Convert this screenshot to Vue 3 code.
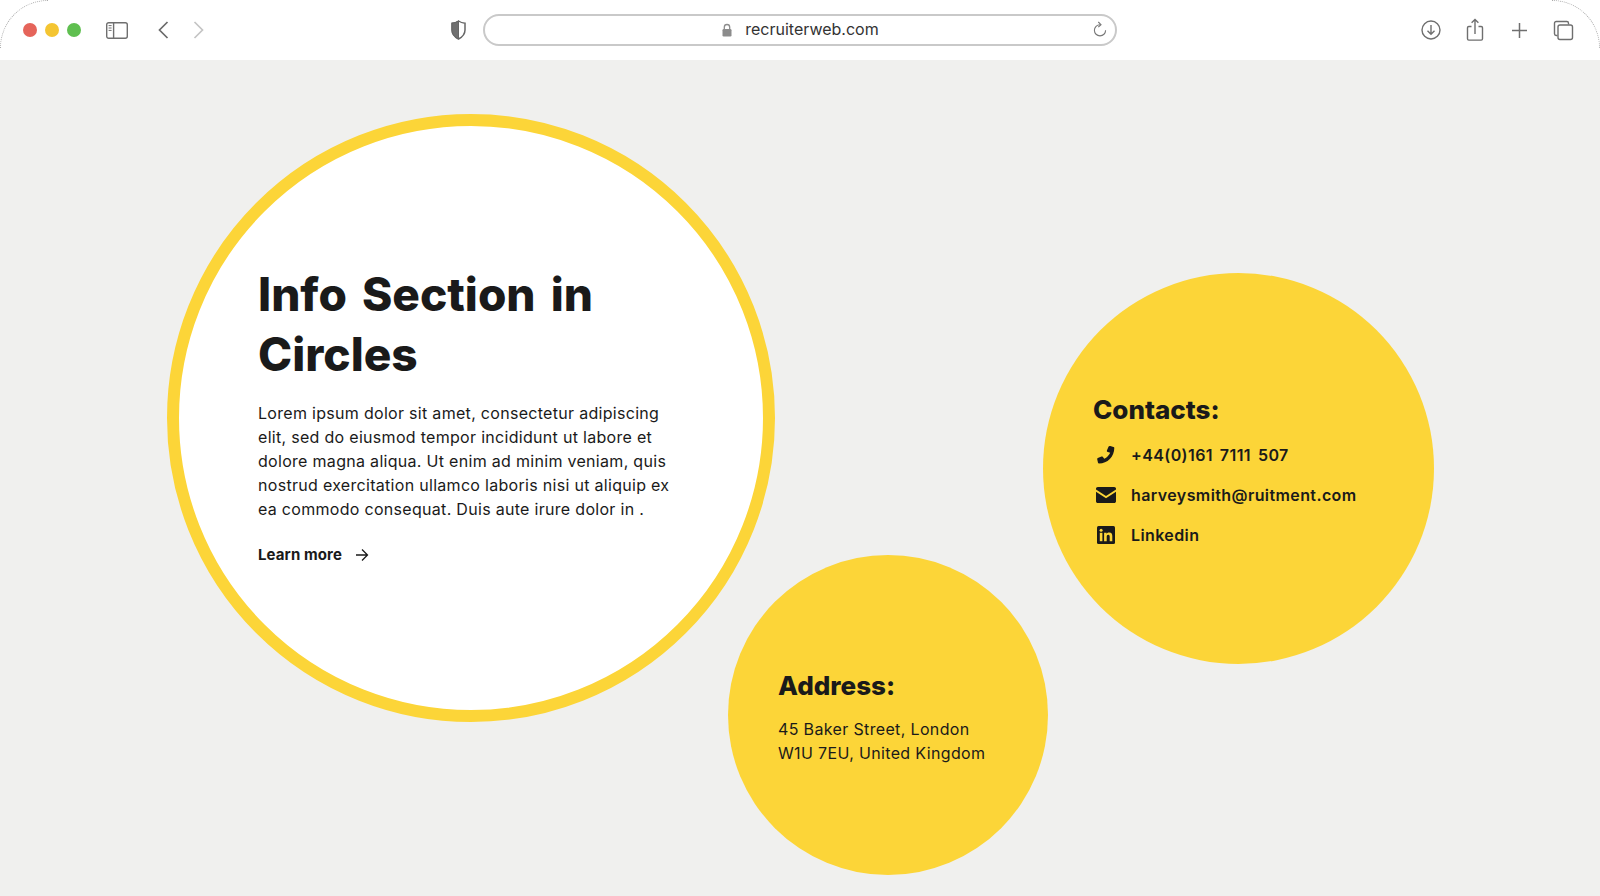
<script setup>
const contacts = [
  { id: 'phone', label: '+44(0)161 7111 507' },
  { id: 'mail', label: 'harveysmith@ruitment.com' },
  { id: 'linkedin', label: 'Linkedin' }
]
</script>

<template>
  <div class="page">
    <header class="toolbar">
      <div class="left">
        <span class="light red"></span>
        <span class="light amber"></span>
        <span class="light green"></span>
        <svg class="sidebar-icon" width="24" height="19" viewBox="0 0 24 19" fill="none" stroke="#6f6f6f" stroke-width="1.4">
          <rect x="1.7" y="1.7" width="20.6" height="15.6" rx="2" />
          <path d="M8.6 1.7v15.6" />
          <path d="M3.6 4.6h3M3.6 7h3M3.6 9.4h3" stroke-width="1" />
        </svg>
        <svg class="chevron" width="11" height="18" viewBox="0 0 11 18" fill="none" stroke="#6a6a6a" stroke-width="1.7">
          <path d="M9.5 1 1.5 9l8 8" />
        </svg>
        <svg class="chevron next" width="11" height="18" viewBox="0 0 11 18" fill="none" stroke="#c4c4c4" stroke-width="1.7">
          <path d="M1.5 1l8 8-8 8" />
        </svg>
        <svg class="shield" width="15" height="20" viewBox="0 0 15 20">
          <path d="M7.5 1C5.6 2.3 3.500 3 1 3.200V10c0 4 2.600 7 6.500 9 3.900-2 6.500-5 6.500-9V3.200C11.500 3 9.400 2.300 7.500 1Z" fill="#fff" stroke="#666" stroke-width="1.500" />
          <path d="M7.500 1C5.600 2.300 3.500 3 1 3.200V10c0 4 2.600 7 6.500 9Z" fill="#707070" stroke="#666" stroke-width="1" />
        </svg>
      </div>
      <div class="url">
        <svg width="12" height="14" viewBox="0 0 12 14" fill="none">
          <path d="M3.300 6V4.200a2.700 2.700 0 0 1 5.400 0V6" stroke="#8c8c8c" stroke-width="1.300" />
          <rect x="1.500" y="6" width="9" height="7.500" rx="1.200" fill="#8c8c8c" />
        </svg>
        <span class="host">recruiterweb.com</span>
        <svg class="reload" width="16" height="18" viewBox="0 0 16 18" fill="none" stroke="#777" stroke-width="1.100">
          <path d="M8 3.700a5.600 5.600 0 1 0 5.600 5.600" />
          <path d="M6.300 1 9 3.700 6.300 6.200" />
        </svg>
      </div>
      <div class="right">
        <svg width="22" height="22" viewBox="0 0 22 22" fill="none" stroke="#6f6f6f" stroke-width="1.400">
          <circle cx="11" cy="11" r="9" />
          <path d="M11 6v9M7.500 11.800 11 15.300l3.500-3.500" />
        </svg>
        <svg width="18" height="24" viewBox="0 0 18 24" fill="none" stroke="#6f6f6f" stroke-width="1.400">
          <path d="M5.500 8.500H2.800A1.300 1.300 0 0 0 1.500 9.800v11a1.300 1.300 0 0 0 1.300 1.300h12.400a1.300 1.300 0 0 0 1.300-1.300v-11a1.300 1.300 0 0 0-1.300-1.300h-2.700" />
          <path d="M9 16V1.500M5.600 4.800 9 1.500l3.400 3.300" />
        </svg>
        <svg width="17" height="17" viewBox="0 0 17 17" fill="none" stroke="#6f6f6f" stroke-width="1.500">
          <path d="M8.500 1v15M1 8.500h15" />
        </svg>
        <svg width="21" height="21" viewBox="0 0 21 21" fill="none" stroke="#6f6f6f" stroke-width="1.400">
          <path d="M4.500 15.500H3.200a1.700 1.700 0 0 1-1.700-1.700V3.200a1.700 1.700 0 0 1 1.700-1.700h10.600a1.700 1.700 0 0 1 1.700 1.700v1.300" />
          <rect x="5" y="5" width="14.500" height="14.500" rx="2" />
        </svg>
      </div>
    </header>

    <main class="stage">
      <section class="circle intro">
        <h1>Info Section in Circles</h1>
        <p>Lorem ipsum dolor sit amet, consectetur adipiscing elit, sed do eiusmod tempor incididunt ut labore et dolore magna aliqua. Ut enim ad minim veniam, quis nostrud exercitation ullamco laboris nisi ut aliquip ex ea commodo consequat. Duis aute irure dolor in .</p>
        <a class="more" href="#" @click.prevent>
          Learn more
          <svg width="14" height="14" viewBox="0 0 14 14" fill="none" stroke="#1a1a1a" stroke-width="1.300">
            <path d="M1 7h11.500M7 1.500 12.500 7 7 12.500" />
          </svg>
        </a>
      </section>

      <section class="circle address">
        <h2>Address:</h2>
        <p>45 Baker Street, London<br>W1U 7EU, United Kingdom</p>
      </section>

      <section class="circle contacts">
        <h2>Contacts:</h2>
        <ul>
          <li v-for="item in contacts" :key="item.id">
            <svg v-if="item.id === 'phone'" width="20" height="20" viewBox="0 0 20 20" fill="#1a1a1a">
              <path d="M14.200 1.100 17.500 1.900c.5.100.8.500.8 1C18.300 11.300 11.500 18.500 3 18.500c-.5 0-.9-.3-1-.8l-.8-3.400c-.1-.5.100-1 .6-1.200l3.700-1.600c.4-.2.900-.1 1.200.3l1.600 2c2.600-1.200 4.700-3.400 5.900-6L11.200 6.700c-.4-.3-.5-.8-.3-1.200l1.600-3.700c.2-.5.700-.8 1.700-.7Z" />
            </svg>
            <svg v-else-if="item.id === 'mail'" width="20" height="16" viewBox="0 0 20 16" fill="#1a1a1a">
              <path d="M1.800 0h16.400C19.200 0 20 .8 20 1.800v.7l-10 6.600L0 2.500v-.7C0 .8.800 0 1.800 0Z" />
              <path d="M0 4.700 10 11.200l10-6.500v9.500c0 1-.8 1.800-1.800 1.800H1.800C.8 16 0 15.200 0 14.200Z" />
            </svg>
            <svg v-else width="18" height="18" viewBox="0 0 18 18">
              <rect width="18" height="18" rx="1.500" fill="#1a1a1a" />
              <rect x="2.800" y="6.800" width="2.600" height="8.400" fill="#fcd538" />
              <circle cx="4.100" cy="4.200" r="1.500" fill="#fcd538" />
              <path d="M7.100 6.800h2.500V8c.5-.9 1.500-1.400 2.700-1.400 2.300 0 3 1.500 3 3.700v4.900h-2.600v-4.400c0-1-.2-2-1.400-2s-1.600.9-1.600 2v4.400H7.100Z" fill="#fcd538" />
            </svg>
            <span>{{ item.label }}</span>
          </li>
        </ul>
      </section>
    </main>
  </div>
</template>

<style>
html, body {
  margin: 0;
  background: #f0f0ee;
}
</style>

<style scoped>
.page {
  width: 1600px;
  height: 896px;
  overflow: hidden;
  background: #f0f0ee;
  color: #1a1a1a;
  font-family: Inter, "Liberation Sans", sans-serif;
}
.toolbar {
  position: relative;
  display: grid;
  grid-template-columns: 483px 634px 1fr;
  align-items: center;
  height: 60px;
  background: #fff;
}
.toolbar::before,
.toolbar::after {
  content: "";
  position: absolute;
  top: 0;
  width: 48px;
  height: 48px;
  box-sizing: border-box;
  border-top: 1px dotted #aaa;
}
.toolbar::before {
  left: 0;
  border-left: 1px dotted #aaa;
  border-top-left-radius: 48px;
}
.toolbar::after {
  right: 0;
  border-right: 1px dotted #aaa;
  border-top-right-radius: 48px;
}
.left {
  display: flex;
  align-items: center;
  padding-left: 23px;
}
.light {
  width: 14px;
  height: 14px;
  border-radius: 50%;
  margin-right: 8px;
}
.red { background: #e5645a; }
.amber { background: #f4c532; }
.green { background: #5fbf50; }
.sidebar-icon { margin-left: 16px; }
.chevron { margin-left: 29px; }
.chevron.next { margin-left: 24px; }
.shield { margin-left: 247px; }
.url {
  display: flex;
  align-items: center;
  justify-content: center;
  gap: 12px;
  position: relative;
  box-sizing: border-box;
  height: 32px;
  border: 2px solid #c9c9c9;
  border-radius: 16px;
  font-size: 16px;
  line-height: 26px;
}
.host {
  color: #333;
  padding-bottom: 2px;
}
.reload {
  position: absolute;
  right: 7px;
  top: 5px;
}
.right {
  display: grid;
  grid-auto-flow: column;
  grid-auto-columns: 44px;
  justify-content: end;
  justify-items: center;
  align-items: center;
  padding-right: 15px;
}
.stage {
  display: flex;
  align-items: flex-start;
  padding-left: 167px;
}
.circle {
  flex: none;
  display: flex;
  flex-direction: column;
  justify-content: center;
  box-sizing: border-box;
  border-radius: 50%;
  background: #fcd538;
  letter-spacing: .3px;
}
.intro {
  width: 608px;
  height: 608px;
  margin-top: 53.500px;
  padding-left: 79px;
  padding-bottom: 4px;
  background: #fff;
  border: 12px solid #fcd538;
}
h1 {
  margin: 0 0 17px;
  width: 400px;
  font-size: 46px;
  line-height: 60px;
  font-weight: 800;
  letter-spacing: 0;
  word-spacing: 5px;
}
.intro p {
  margin: 0 0 22px;
  width: 420px;
  font-size: 16px;
  line-height: 24px;
}
.more {
  display: flex;
  align-items: center;
  gap: 13px;
  color: #1a1a1a;
  text-decoration: none;
  font-size: 15px;
  line-height: 24px;
  font-weight: 700;
  letter-spacing: .1px;
}
.address {
  width: 320px;
  height: 320px;
  margin: 495px 0 0 -47px;
  padding: 4px 0 0 50px;
  letter-spacing: .35px;
}
.contacts {
  width: 391px;
  height: 391px;
  margin: 212.500px 0 0 -5px;
  padding: 11px 0 0 50px;
}
h2 {
  margin: 0 0 14px;
  font-size: 26px;
  line-height: 34px;
  font-weight: 800;
  letter-spacing: 0;
}
.contacts h2 {
  margin-bottom: 8px;
}
.address p {
  margin: 0;
  font-size: 16px;
  line-height: 24px;
}
.contacts ul {
  margin: 0;
  padding: 0;
  list-style: none;
}
.contacts li {
  display: grid;
  grid-template-columns: 26px auto;
  column-gap: 12px;
  align-items: center;
  justify-items: center;
  height: 40px;
  font-size: 16px;
  font-weight: 600;
  letter-spacing: .4px;
  word-spacing: 2.500px;
}
.contacts li span {
  justify-self: start;
}
</style>
